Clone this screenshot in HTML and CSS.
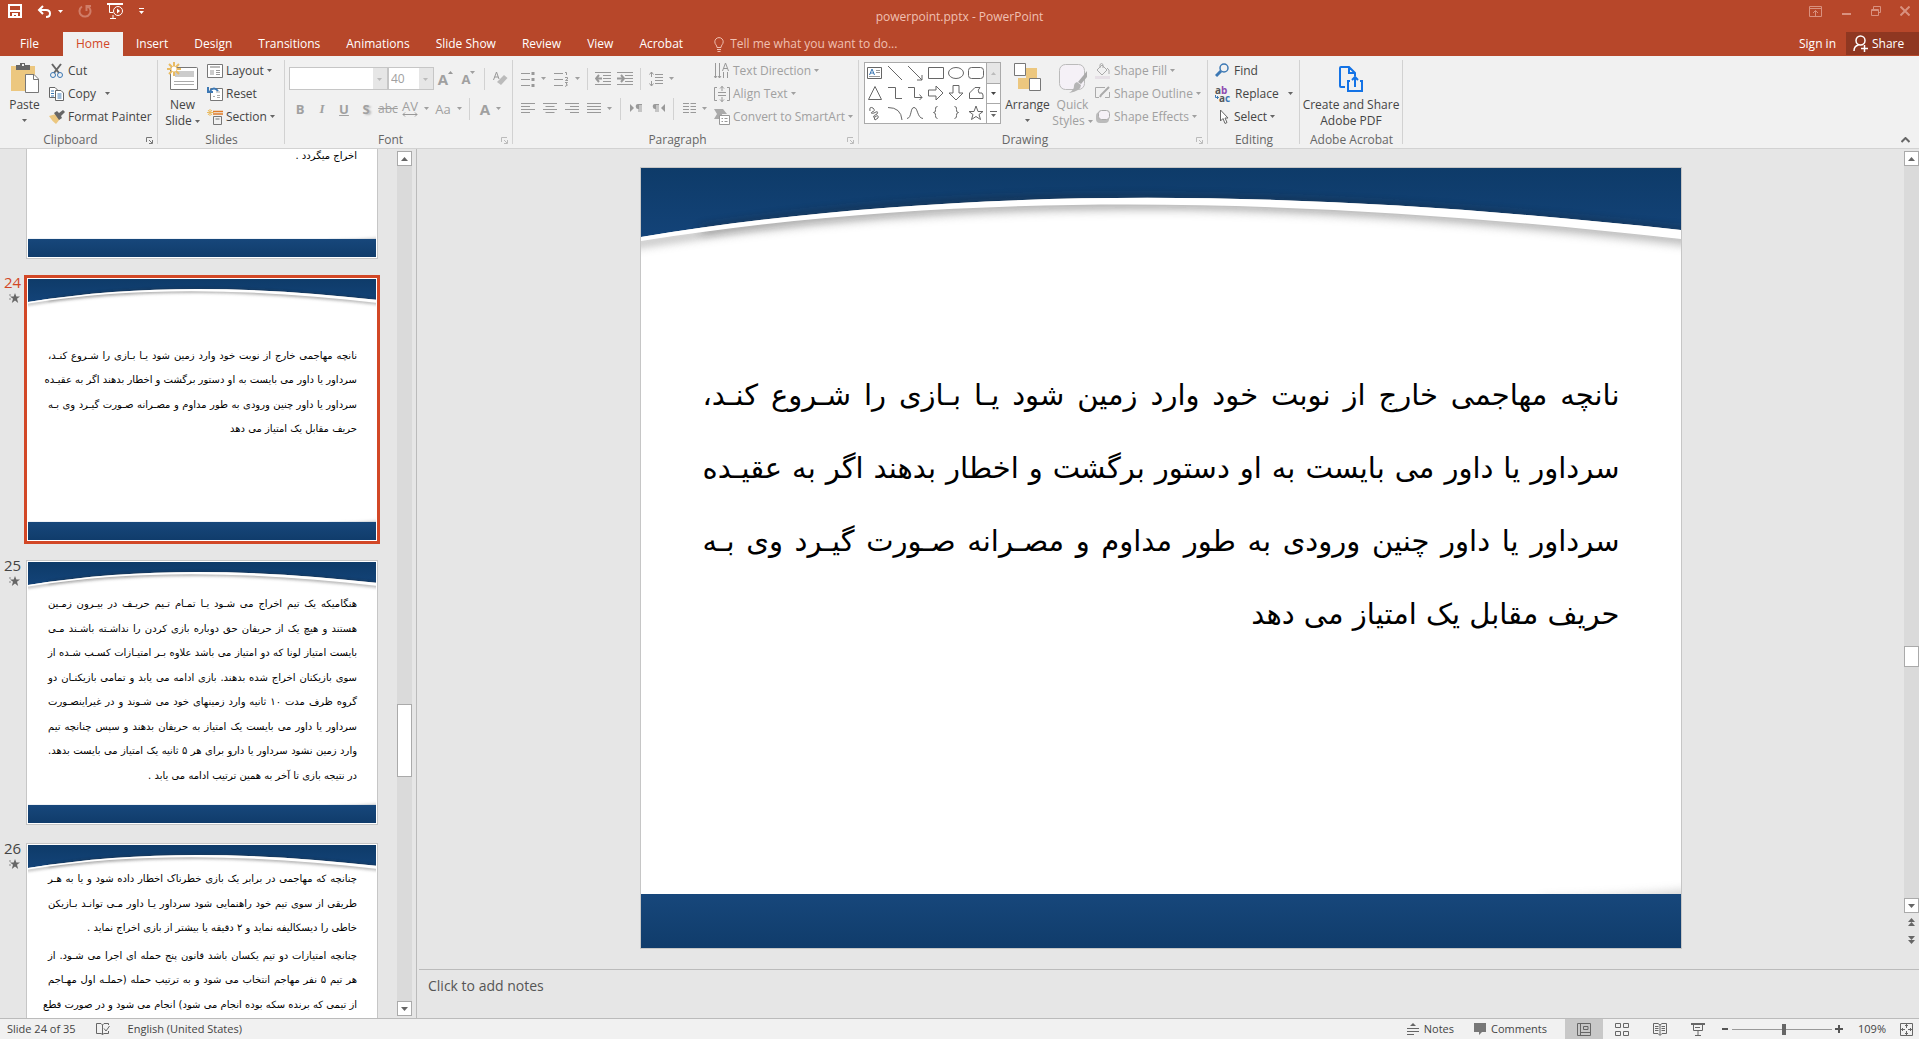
FILE: index.html
```
<!DOCTYPE html>
<html lang="en">
  <head>
    <meta charset="utf-8">
    <meta name="viewport" content="width=device-width, initial-scale=1">
    <title>powerpoint.pptx - PowerPoint</title>
    <link rel="stylesheet" href="styles.css">
  </head>
  <body>
    <!-- shared drawings -->
    <svg class="defs" width="0" height="0" aria-hidden="true">
      <defs>
        <linearGradient id="sky" x1="0" y1="0" x2="0" y2="1">
          <stop offset="0" stop-color="#0e3b69"/>
          <stop offset="1" stop-color="#134378"/>
        </linearGradient>
        <linearGradient id="sea" x1="0" y1="0" x2="0" y2="1">
          <stop offset="0" stop-color="#17477b"/>
          <stop offset="1" stop-color="#103c6b"/>
        </linearGradient>
        <filter id="soft" x="-5%" y="-50%" width="110%" height="200%">
          <feGaussianBlur stdDeviation="5"/>
        </filter>
        <symbol id="backdrop" viewBox="0 0 1040 780">
          <rect width="1040" height="780" fill="#fff"/>
          <path d="M-20 78C347 18 693 32 1060 75" fill="none" stroke="#999" stroke-width="8" opacity=".7" filter="url(#soft)"/>
          <path d="M0 0H1040V62C693 24 347 12 0 69Z" fill="url(#sky)"/>
          <path d="M60 62C370 14 693 27 1060 66" fill="none" stroke="#222" stroke-width="6" opacity=".45" filter="url(#soft)"/>
          <path d="M0 69C347 12 693 24 1040 62V71C693 32 347 18 0 73Z" fill="#fff"/>
          <path d="M900 730Q980 728 1060 720V740H900Z" fill="#999" opacity=".4" filter="url(#soft)"/>
          <rect y="726" width="1040" height="54" fill="url(#sea)"/>
        </symbol>
        <symbol id="caret" viewBox="0 0 5 3"><path d="M0 0H5L2.500 3Z" fill="currentColor"/></symbol>
        <symbol id="star" viewBox="0 0 11 10"><path d="M6 0L7.300 3.500H11L8 5.800L9.200 10L6 7.400L2.800 10L4 5.800L1 3.500H4.700Z" fill="#666"/><path d="M0 2H2M0 6H2" stroke="#888"/></symbol>
        <symbol id="launch" viewBox="0 0 7 7"><path d="M0.500 5V0.500H6M3 3L6 6M6.500 3V6.500H3" fill="none" stroke="currentColor"/></symbol>
        <symbol id="up" viewBox="0 0 7 4"><path d="M0 4H7L3.500 0Z" fill="#666"/></symbol>
        <symbol id="down" viewBox="0 0 7 4"><path d="M0 0H7L3.500 4Z" fill="#666"/></symbol>
      </defs>
    </svg>

    <header class="titlebar">
      <div class="quick">
        <button type="button" aria-label="Save"><svg width="14" height="14" fill="none" stroke="#fff" stroke-width="2"><path d="M1 1H13V13H1ZM1 7H13M5 13V10H9V13"/></svg></button>
        <button type="button" aria-label="Undo"><svg width="15" height="13" fill="none" stroke="#fff" stroke-width="2"><path d="M6 1L2 5L6 9M2 5H9Q13 5 13 8.500T9 12"/></svg><svg class="caret" width="5" height="3"><use href="#caret"/></svg></button>
        <button type="button" aria-label="Repeat" disabled><svg width="14" height="14" fill="none" stroke="#d07d68" stroke-width="2"><path d="M9 2A5.500 5.500 0 1 1 4 2.500M8.500 7V2H13"/></svg></button>
        <button type="button" aria-label="Start from beginning"><svg width="17" height="16" fill="none" stroke="#fff"><path d="M0 1H16" stroke-width="2"/><path d="M2.500 2V9.500H6M3 15.500H9M6 15V12"/><circle cx="11" cy="8" r="4.500"/><path d="M10 5.500V10.500L13 8Z" fill="#fff" stroke="none"/></svg></button>
        <button type="button" aria-label="Customize toolbar"><svg width="5" height="6" fill="#fff"><path d="M0 0H5V1H0ZM0 3H5L2.500 6Z"/></svg></button>
      </div>
      <h1>powerpoint.pptx - PowerPoint</h1>
      <div class="window">
        <button type="button" aria-label="Ribbon display options"><svg width="14" height="11" fill="none" stroke="#d9917f"><path d="M.5.500H12.500V10.500H.5ZM.5 2.500H12.500M6.500 10V4.500M4 7L6.500 4.500L9 7"/></svg></button>
        <button type="button" aria-label="Minimize"><svg width="10" height="10"><path d="M0 7H9V9H0Z" fill="#d9917f"/></svg></button>
        <button type="button" aria-label="Restore"><svg width="10" height="10" fill="none" stroke="#d9917f"><path d="M.5 3.500H7.500V9.500H.5ZM2.500 3V.5H9.500V6.500H8M.5 4.500H7.500"/></svg></button>
        <button type="button" aria-label="Close"><svg width="10" height="10" stroke="#d9917f" stroke-width="2"><path d="M.5.500L9.500 9.500M9.500.500L.5 9.500"/></svg></button>
      </div>
    </header>

    <nav class="tabs">
      <a class="file" href="#file">File</a>
      <a class="current" href="#home">Home</a>
      <a href="#insert">Insert</a>
      <a href="#design">Design</a>
      <a href="#transitions">Transitions</a>
      <a href="#animations">Animations</a>
      <a href="#slideshow">Slide Show</a>
      <a href="#review">Review</a>
      <a href="#view">View</a>
      <a href="#acrobat">Acrobat</a>
      <label class="tell">
        <svg width="10" height="15" fill="none" stroke="#f0c0b2"><path d="M3 10.500C3 8 .8 7.500 .8 4.800A4.200 4.200 0 0 1 9.200 4.800C9.200 7.500 7 8 7 10.500ZM3 12.500H7M3.500 14.500H6.500"/></svg>
        <input type="text" placeholder="Tell me what you want to do...">
      </label>
      <a class="signin" href="#signin">Sign in</a>
      <button type="button" class="share"><svg width="16" height="17" fill="none" stroke="#fff" stroke-width="1.500"><circle cx="7.500" cy="5.500" r="4.500"/><path d="M1 16Q1 11 5.500 10M8 13.500H15M11.500 10V17"/></svg>Share</button>
    </nav>

    <section class="ribbon">
      <div class="group clipboard">
        <div class="tools">
          <button type="button" class="big">
            <svg width="30" height="32"><path d="M1 4H25V29H1Z" fill="#ecc77f"/><path d="M6 3H10V1H15V3H20V8H6Z" fill="#666"/><path d="M12 2H14V4H12Z" fill="#f1f1f1"/><path d="M15.500 12.500H24L28.500 17V30.500H15.500Z" fill="#fff" stroke="#777"/><path d="M23.500 13V17.500H28" fill="none" stroke="#777"/></svg>
            <span>Paste</span>
            <svg class="caret" width="5" height="3"><use href="#caret"/></svg>
          </button>
          <div class="rows">
            <button type="button"><svg width="16" height="16" fill="none"><path d="M3 1L10 10M12 1L5 10" stroke="#666" stroke-width="2"/><circle cx="4" cy="12" r="2.500" stroke="#3c78b4"/><circle cx="11" cy="12" r="2.500" stroke="#3c78b4"/></svg>Cut</button>
            <button type="button"><svg width="16" height="16" fill="#fff" stroke="#666"><path d="M.5 1.500H6L8.500 4V11.500H.5Z"/><path d="M6.500 4.500H12L14.500 7V14.500H6.500Z"/><path d="M2 5H5M2 7.500H5M2 10H5M8.500 8H12.500M8.500 10H12.500M8.500 12H12.500" stroke="#3c78b4"/></svg>Copy<svg class="caret far" width="5" height="3"><use href="#caret"/></svg></button>
            <button type="button"><svg width="16" height="16"><path d="M0 7L7 5L11 10L7 15Q3 12 0 7Z" fill="#ecc77f"/><path d="M5 4L8 2L10 4L14 1L16 3L12 7L13 9L10 11Z" fill="#666"/></svg>Format Painter</button>
          </div>
        </div>
        <h2>Clipboard</h2>
        <svg class="launch" width="7" height="7"><use href="#launch"/></svg>
      </div>

      <div class="group slides">
        <div class="tools">
          <button type="button" class="big">
            <svg width="32" height="32" fill="none"><path d="M3.500 6.500Q3.500 5.500 4.500 5.500H29.500Q30.500 5.500 30.500 6.500V27.500H3.500Z" fill="#fff" stroke="#777"/><path d="M8 9H27V15H8Z" fill="#ccc"/><path d="M7 19.500H27M7 22.500H27" stroke="#aaa"/><path d="M7 0V14M0 7H14M2 2L12 12M12 2L2 12" stroke="#e9bb62" stroke-width="2"/><circle cx="7" cy="7" r="2.500" fill="#fff"/></svg>
            <span>New</span>
            <span>Slide<svg class="caret" width="5" height="3"><use href="#caret"/></svg></span>
          </button>
          <div class="rows">
            <button type="button"><svg width="16" height="16" fill="none" stroke="#777"><path d="M.5 1.500H15.500V14.500H.5Z" fill="#fff"/><path d="M3 4H13" stroke="#bbb" stroke-width="2"/><path d="M3 7H7V12H3Z" fill="#ccc" stroke="none"/><path d="M9 7.500H13M9 9.500H13M9 11.500H13" stroke="#999"/></svg>Layout<svg class="caret" width="5" height="3"><use href="#caret"/></svg></button>
            <button type="button"><svg width="16" height="16" fill="none" stroke="#777"><path d="M3.500 2.500H15.500V14.500H3.500Z" fill="#fff"/><path d="M9 6H13M10 9.500H13M10 11.500H13M6 10.500H8" stroke="#aaa"/><path d="M11 5Q7 0 3 5M1 1V6H6" stroke="#3c78b4" stroke-width="2"/></svg>Reset</button>
            <button type="button"><svg width="16" height="16" fill="none" stroke="#777"><path d="M6.500 7.500H14.500V15.500H6.500ZM8.500 10H12.500"/><path d="M6 2.500H16M6 5H16" stroke="#e07b27" stroke-width="1.500"/><path d="M3 0V7M0 3.500H7M1 1L5 6M5 1L1 6" stroke="#e9bb62"/></svg>Section<svg class="caret" width="5" height="3"><use href="#caret"/></svg></button>
          </div>
        </div>
        <h2>Slides</h2>
      </div>

      <div class="group font">
        <div class="tools stack">
          <div class="line">
            <span class="combo"><select class="face" aria-label="Font" disabled><option></option></select><svg class="caret" width="5" height="3"><use href="#caret"/></svg></span>
            <span class="combo"><select class="size" aria-label="Font size" disabled><option>40</option></select><svg class="caret" width="5" height="3"><use href="#caret"/></svg></span>
            <button type="button" class="ic" disabled aria-label="Increase font size"><b class="grow">A</b><svg width="5" height="3"><path d="M0 3H5L2.500 0Z" fill="#999"/></svg></button>
            <button type="button" class="ic" disabled aria-label="Decrease font size"><b>A</b><svg width="5" height="3"><use href="#caret"/></svg></button>
            <i class="sep"></i>
            <button type="button" class="ic" disabled aria-label="Clear formatting"><svg width="15" height="15" fill="none" stroke="#999"><path d="M0.500 9L3.500 1L6 8M1.500 6H5"/><path d="M4 11L11 4L14.500 7L8 14Z" fill="#bbb" stroke="none"/></svg></button>
          </div>
          <div class="line">
            <button type="button" class="ic" disabled><b>B</b></button>
            <button type="button" class="ic" disabled><b class="serif"><em>I</em></b></button>
            <button type="button" class="ic" disabled><b><u>U</u></b></button>
            <button type="button" class="ic" disabled><b class="shade">S</b></button>
            <button type="button" class="ic" disabled><s>abc</s></button>
            <button type="button" class="ic wide" disabled aria-label="Character spacing"><span class="track">AV<svg width="16" height="5" fill="none" stroke="#999"><path d="M3 .5L1 2.500L3 4.500M13 .5L15 2.500L13 4.500M1 2.500H15"/></svg></span><svg class="caret" width="5" height="3"><use href="#caret"/></svg></button>
            <button type="button" class="ic wide" disabled><span>Aa</span><svg class="caret" width="5" height="3"><use href="#caret"/></svg></button>
            <i class="sep"></i>
            <button type="button" class="ic wide" disabled><b class="grow">A</b><svg class="caret low" width="5" height="3"><use href="#caret"/></svg></button>
          </div>
        </div>
        <h2>Font</h2>
        <svg class="launch off" width="7" height="7"><use href="#launch"/></svg>
      </div>

      <div class="group paragraph">
        <div class="tools">
          <div class="stack">
            <div class="line">
              <button type="button" class="ic wide" disabled aria-label="Bullets"><svg width="14" height="16" stroke="#999"><path d="M0 2.500H9M0 8.500H9M0 14.500H9"/><path d="M10.500 2.500H13.500M10.500 8.500H13.500M10.500 14.500H13.500" stroke-width="3"/></svg><svg class="caret" width="5" height="3"><use href="#caret"/></svg></button>
              <button type="button" class="ic wide" disabled aria-label="Numbering"><svg width="15" height="16" fill="none" stroke="#999"><path d="M0 2.500H9M0 8.500H9M0 14.500H9M11 1.500H12.500V4M11 6.500H13.500V8L11.500 9.500H14M11 11.500H13.500L12 13L13.500 14L11 15.500"/></svg><svg class="caret" width="5" height="3"><use href="#caret"/></svg></button>
              <i class="sep"></i>
              <button type="button" class="ic" disabled aria-label="Decrease list level"><svg width="16" height="14" fill="none" stroke="#999"><path d="M0 .5H16M8 3.500H16M8 6.500H16M8 9.500H16M0 12.500H16"/><path d="M4 3L1 6.500L4 10M1 6.500H7" stroke-width="2"/></svg></button>
              <button type="button" class="ic" disabled aria-label="Increase list level"><svg width="16" height="14" fill="none" stroke="#999"><path d="M0 .5H16M8 3.500H16M8 6.500H16M8 9.500H16M0 12.500H16"/><path d="M4 3L7 6.500L4 10M0 6.500H6" stroke-width="2"/></svg></button>
              <i class="sep"></i>
              <button type="button" class="ic wide" disabled aria-label="Line spacing"><svg width="14" height="16" fill="none" stroke="#999"><path d="M6 3.500H14M6 6.500H14M6 9.500H14M6 12.500H14M.5 3.500L2.500 1L4.500 3.500M2.500 1V6M.5 12.500L2.500 15L4.500 12.500M2.500 15V10"/></svg><svg class="caret" width="5" height="3"><use href="#caret"/></svg></button>
            </div>
            <div class="line">
              <button type="button" class="ic" disabled aria-label="Align left"><svg width="14" height="11" stroke="#999"><path d="M0 .5H14M0 3.500H9M0 6.500H14M0 9.500H9"/></svg></button>
              <button type="button" class="ic" disabled aria-label="Center"><svg width="14" height="11" stroke="#999"><path d="M0 .5H14M2.500 3.500H11.500M0 6.500H14M2.500 9.500H11.500"/></svg></button>
              <button type="button" class="ic" disabled aria-label="Align right"><svg width="14" height="11" stroke="#999"><path d="M0 .5H14M5 3.500H14M0 6.500H14M5 9.500H14"/></svg></button>
              <button type="button" class="ic wide" disabled aria-label="Justify"><svg width="14" height="11" stroke="#999"><path d="M0 .5H14M0 3.500H14M0 6.500H14M0 9.500H14"/></svg><svg class="caret" width="5" height="3"><use href="#caret"/></svg></button>
              <i class="sep"></i>
              <button type="button" class="ic" disabled aria-label="Left to right"><svg width="13" height="9" fill="#999"><path d="M0 0L4 4L0 8ZM8 0H12V1H11.500V8H10.500V1H9.500V8H8.500V5A2.500 2.500 0 0 1 8 0Z"/></svg></button>
              <button type="button" class="ic" disabled aria-label="Right to left"><svg width="13" height="9" fill="#999"><path d="M13 0L9 4L13 8ZM3 0H7V1H6.500V8H5.500V1H4.500V8H3.500V5A2.500 2.500 0 0 1 3 0Z"/></svg></button>
              <i class="sep"></i>
              <button type="button" class="ic wide" disabled aria-label="Columns"><svg width="13" height="11" stroke="#999"><path d="M0 .5H6M0 3.500H6M0 6.500H6M0 9.500H6M7.500 .5H13M7.500 3.500H13M7.500 6.500H13M7.500 9.500H13"/></svg><svg class="caret" width="5" height="3"><use href="#caret"/></svg></button>
            </div>
          </div>
          <div class="rows">
            <button type="button" disabled><svg width="16" height="16" fill="none" stroke="#999"><path d="M1.500 0V15M5.500 0V15M9.500 9V15M13.500 9V15M8.500 8L11.500 0L14.500 8M9.500 5.500H13.500M0 13L1.500 15L3 13M4 13L5.500 15L7 13"/></svg>Text Direction<svg class="caret" width="5" height="3"><use href="#caret"/></svg></button>
            <button type="button" disabled><svg width="16" height="16" fill="none" stroke="#999"><path d="M3 1.500H.5V14.500H3M13 1.500H15.500V14.500H13M4 6.500H12M4 9.500H12M8 0V5M6 2.500L8 .5L10 2.500M8 11V16M6 13.500L8 15.500L10 13.500"/></svg>Align Text<svg class="caret" width="5" height="3"><use href="#caret"/></svg></button>
            <button type="button" disabled><svg width="16" height="16"><path d="M0 0H9L13 5H8V7H5V10H0L3 5Z" fill="#aaa"/><path d="M5.500 6.500H15.500V15.500H5.500Z" fill="#fff" stroke="#999"/><path d="M7.500 9.500H9M10.500 9.500H13.500M7.500 12.500H9M10.500 12.500H13.500" stroke="#999"/></svg>Convert to SmartArt<svg class="caret" width="5" height="3"><use href="#caret"/></svg></button>
          </div>
        </div>
        <h2>Paragraph</h2>
        <svg class="launch off" width="7" height="7"><use href="#launch"/></svg>
      </div>

      <div class="group drawing">
        <div class="tools">
          <div class="gallery">
            <div class="shapes">
              <button type="button" aria-label="Text box"><svg width="16" height="16"><path d="M.5 2.500H14.500V13.500H.5Z"/><path d="M2.500 10L5 4L7.500 10M3 8H7" stroke="#3c78b4"/><path d="M9 5.500H13M9 7.500H13M2 11.500H13" stroke="#999"/></svg></button>
              <button type="button" aria-label="Line"><svg width="16" height="16"><path d="M1 1L15 15"/></svg></button>
              <button type="button" aria-label="Arrow"><svg width="16" height="16"><path d="M1 1L15 15M15 10V15H10"/></svg></button>
              <button type="button" aria-label="Rectangle"><svg width="16" height="16"><path d="M.5 2.500H15.500V13.500H.5Z"/></svg></button>
              <button type="button" aria-label="Oval"><svg width="16" height="16"><ellipse cx="8" cy="8" rx="7.500" ry="5.500"/></svg></button>
              <button type="button" aria-label="Rounded rectangle"><svg width="16" height="16"><rect x=".5" y="2.500" width="15" height="11" rx="3"/></svg></button>
              <button type="button" aria-label="Triangle"><svg width="16" height="16"><path d="M8 1.500L14.500 14.500H1.500Z"/></svg></button>
              <button type="button" aria-label="Elbow connector"><svg width="16" height="16"><path d="M1 2.500H8.500V13.500H15"/></svg></button>
              <button type="button" aria-label="Elbow arrow"><svg width="16" height="16"><path d="M1 2.500H7.500V12.500H15M12.500 9.500L15 12.500L12.500 15"/></svg></button>
              <button type="button" aria-label="Right arrow"><svg width="16" height="16"><path d="M.5 5H8V1L15 8L8 15V11H.5Z"/></svg></button>
              <button type="button" aria-label="Down arrow"><svg width="16" height="16"><path d="M5 .5V8H1L8 15L15 8H11V.5Z"/></svg></button>
              <button type="button" aria-label="Freeform"><svg width="16" height="16"><path d="M12 2.500H7L1.500 8V13.500H15V10Q15 7 11 8Q9 5 12 2.500Z"/></svg></button>
              <button type="button" aria-label="Scribble"><svg width="16" height="16"><path d="M3 6Q2 1 6 3Q9 6 5 7Q3 9 7 8Q12 5 10 9Q4 12 8 12Q12 9 11 13L8 15L7 12"/></svg></button>
              <button type="button" aria-label="Arc"><svg width="16" height="16"><path d="M1 2.500Q14 2.500 15 15"/></svg></button>
              <button type="button" aria-label="Curve"><svg width="16" height="16"><path d="M0 13.500C5 13 3 2.500 7 2.500S10 13 16 13.500"/></svg></button>
              <button type="button" aria-label="Left brace"><svg width="16" height="16"><path d="M9.500 1.500Q7 1.500 7.500 4.500T5.500 7.500Q8 8 7.500 10.500T9.500 13.500"/></svg></button>
              <button type="button" aria-label="Right brace"><svg width="16" height="16"><path d="M6.500 1.500Q9 1.500 8.500 4.500T10.500 7.500Q8 8 8.500 10.500T6.500 13.500"/></svg></button>
              <button type="button" aria-label="Star"><svg width="16" height="16"><path d="M8 1L10 6.500H15L11 9.500L12.500 14.500L8 11.500L3.500 14.500L5 9.500L1 6.500H6Z"/></svg></button>
            </div>
            <div class="pager">
              <button type="button" disabled aria-label="Row up"><svg width="5" height="3"><path d="M0 3H5L2.500 0Z" fill="#bbb"/></svg></button>
              <button type="button" aria-label="Row down"><svg width="5" height="3"><use href="#caret"/></svg></button>
              <button type="button" aria-label="More shapes"><svg width="7" height="6" fill="#666"><path d="M0 0H7V1H0ZM1 3H6L3.500 6Z"/></svg></button>
            </div>
          </div>
          <button type="button" class="big">
            <svg width="30" height="32"><path d="M13 6H24V17H13ZM5 16H16V27H5Z" fill="#ecc77f"/><path d="M1.500 1.500H12.500V13.500H1.500ZM16.500 16.500H27.500V28.500H16.500Z" fill="#fff" stroke="#777"/></svg>
            <span>Arrange</span>
            <svg class="caret" width="5" height="3"><use href="#caret"/></svg>
          </button>
          <button type="button" class="big" disabled>
            <svg width="30" height="32"><rect x="1.500" y="2.500" width="25" height="25" rx="6" fill="#f5f1f7" stroke="#bbb"/><path d="M29 9V15L23 22L20 20Z" fill="#aaa"/><path d="M19 20L23 23Q23 29 11 31Q16 28 16 24Q16 21 19 20Z" fill="#b5b5b5"/></svg>
            <span>Quick</span>
            <span>Styles<svg class="caret" width="5" height="3"><use href="#caret"/></svg></span>
          </button>
          <div class="rows">
            <button type="button" disabled><svg width="16" height="16" fill="none" stroke="#aaa"><path d="M2 7L7 2L12 7L7 12ZM5 5V1.500Q6.500-.5 8 1.500V5M12 5Q15 6 14 11"/><path d="M0 13H15V16H0Z" fill="#e6e0e6" stroke="none"/></svg>Shape Fill<svg class="caret" width="5" height="3"><use href="#caret"/></svg></button>
            <button type="button" disabled><svg width="16" height="16" fill="none" stroke="#aaa"><path d="M10 1.500H.5V11.500H4M14.500 6V11.500H10"/><path d="M14 1L6 9L5 11" stroke-width="2"/></svg>Shape Outline<svg class="caret" width="5" height="3"><use href="#caret"/></svg></button>
            <button type="button" disabled><svg width="16" height="16"><rect x="1" y="3" width="13" height="11" rx="4" fill="#bbb"/><rect x="3.500" y="1.500" width="11" height="9" rx="3" fill="#f5f1f7" stroke="#aaa"/></svg>Shape Effects<svg class="caret" width="5" height="3"><use href="#caret"/></svg></button>
          </div>
        </div>
        <h2>Drawing</h2>
        <svg class="launch off" width="7" height="7"><use href="#launch"/></svg>
      </div>

      <div class="group editing">
        <div class="tools">
          <div class="rows">
            <button type="button"><svg width="16" height="16" fill="none" stroke="#3c78b4"><circle cx="9" cy="5" r="4" stroke-width="1.500"/><path d="M6 8L1 13" stroke-width="3"/></svg>Find</button>
            <button type="button"><span class="swap"><b>a<i>b</i></b><b><svg width="4" height="5" fill="none" stroke="#3c78b4"><path d="M.5 0V2.500H3.500M2 1L3.500 2.500L2 4"/></svg>a<u>c</u></b></span>Replace<svg class="caret far" width="5" height="3"><use href="#caret"/></svg></button>
            <button type="button"><svg width="16" height="16"><path d="M5.500 1V12L8 9.500L10 14.500L12 13.500L10 9H13Z" fill="#fff" stroke="#666"/></svg>Select<svg class="caret" width="5" height="3"><use href="#caret"/></svg></button>
          </div>
        </div>
        <h2>Editing</h2>
      </div>

      <div class="group acrobat">
        <div class="tools">
          <button type="button" class="big">
            <svg width="26" height="32" fill="none" stroke="#1473e6" stroke-width="2"><path d="M7 25H3Q2 25 2 24V6Q2 5 3 5H11L17 11V14M11 5V11H17M12 19H10V29H24V19H22M17 25V15M14 18L17 15L20 18"/></svg>
            <span>Create and Share</span>
            <span>Adobe PDF</span>
          </button>
        </div>
        <h2>Adobe Acrobat</h2>
      </div>
      <button type="button" class="collapse" aria-label="Collapse the ribbon"><svg width="9" height="6" fill="none" stroke="#666" stroke-width="2"><path d="M.5 5L4.500 1L8.500 5"/></svg></button>
    </section>

    <main>
      <aside class="outline">
        <ol>
          <li>
            <div class="mark"></div>
            <div class="thumb">
              <svg class="art" viewBox="0 0 1040 780"><use href="#backdrop"/></svg>
              <div class="copy s23" lang="fa" dir="rtl">
                <p class="end">اخراج میگردد .</p>
              </div>
            </div>
          </li>
          <li class="selected">
            <div class="mark">24<svg width="11" height="10"><use href="#star"/></svg></div>
            <div class="thumb">
              <svg class="art" viewBox="0 0 1040 780"><use href="#backdrop"/></svg>
              <div class="copy s24" lang="fa" dir="rtl">
                <p>نانچه مهاجمی خارج از نوبت خود وارد زمین شود یـا بـازی را شـروع کنـد،</p>
                <p>سرداور یا داور می بایست به او دستور برگشت و اخطار بدهند اگر به عقیـده</p>
                <p>سرداور یا داور چنین ورودی به طور مداوم و مصـرانه صـورت گیـرد وی بـه</p>
                <p class="end">حریف مقابل یک امتیاز می دهد</p>
              </div>
            </div>
          </li>
          <li>
            <div class="mark">25<svg width="11" height="10"><use href="#star"/></svg></div>
            <div class="thumb">
              <svg class="art" viewBox="0 0 1040 780"><use href="#backdrop"/></svg>
              <div class="copy s25" lang="fa" dir="rtl">
                <p>هنگامیکه یک تیم اخراج می شـود یـا تمـام تـیم حریـف در بیـرون زمـین</p>
                <p>هستند و هیچ یک از حریفان حق دوباره بازی کردن را نداشـته باشـند مـی</p>
                <p>بایست امتیاز لونا که دو امتیاز می باشد علاوه بـر امتیـازات کسـب شـده از</p>
                <p>سوی بازیکنان اخراج شده بدهند. بازی ادامه می یابد و تمامی بازیکنـان دو</p>
                <p>گروه ظرف مدت ۱۰ ثانیه وارد زمینهای خود می شـوند و در غیراینصـورت</p>
                <p>سرداور یا داور می بایست یک امتیاز به حریفان بدهند و سپس چنانچه تیم</p>
                <p>وارد زمین نشود سرداور یا دارو برای هر ۵ ثانیه یک امتیاز می بایست بدهد.</p>
                <p class="end">در نتیجه بازی تا آخر به همین ترتیب ادامه می یابد .</p>
              </div>
            </div>
          </li>
          <li>
            <div class="mark">26<svg width="11" height="10"><use href="#star"/></svg></div>
            <div class="thumb">
              <svg class="art" viewBox="0 0 1040 780"><use href="#backdrop"/></svg>
              <div class="copy s26" lang="fa" dir="rtl">
                <p>چنانچه که مهاجمی در برابر یک بازی خطرناک اخطار داده شود و یا به هـر</p>
                <p>طریقی از سوی تیم خود راهنمایی شود سرداور یـا داور مـی توانـد بـازیکن</p>
                <p class="end">خاطی را دیسکالیفه نماید و ۲ دقیقه یا بیشتر از بازی اخراج نماید .</p>
                <p class="next">چنانچه امتیازات دو تیم یکسان باشد قانون پنج حمله ای اجرا می شـود. از</p>
                <p>هر تیم ۵ نفر مهاجم انتخاب می شود و به ترتیب حمله (حملـه اول مهـاجم</p>
                <p>از تیمی که برنده سکه بوده انجام می شود) انجام می شود و در صورت قطع</p>
              </div>
            </div>
          </li>
        </ol>
        <div class="scroll">
          <button type="button" aria-label="Scroll up"><svg width="7" height="4"><use href="#up"/></svg></button>
          <div class="track-left"><div class="handle tall"></div></div>
          <button type="button" aria-label="Scroll down"><svg width="7" height="4"><use href="#down"/></svg></button>
        </div>
      </aside>

      <div class="editor">
        <div class="canvas">
          <div class="stage">
            <article class="slide">
              <svg class="art" viewBox="0 0 1040 780"><use href="#backdrop"/></svg>
              <div class="body" lang="fa" dir="rtl">
                <p>نانچه مهاجمی خارج از نوبت خود وارد زمین شود یـا بـازی را شـروع کنـد،</p>
                <p>سرداور یا داور می بایست به او دستور برگشت و اخطار بدهند اگر به عقیـده</p>
                <p>سرداور یا داور چنین ورودی به طور مداوم و مصـرانه صـورت گیـرد وی بـه</p>
                <p class="end">حریف مقابل یک امتیاز می دهد</p>
              </div>
            </article>
          </div>
          <div class="scroll">
            <button type="button" aria-label="Scroll up"><svg width="7" height="4"><use href="#up"/></svg></button>
            <div class="track-right"><div class="handle"></div></div>
            <button type="button" aria-label="Scroll down"><svg width="7" height="4"><use href="#down"/></svg></button>
            <button type="button" class="jump" aria-label="Previous slide"><svg width="7" height="8" fill="#666"><path d="M0 4H7L3.500 0ZM0 8H7L3.500 4Z"/></svg></button>
            <button type="button" class="jump" aria-label="Next slide"><svg width="7" height="8" fill="#666"><path d="M0 0H7L3.500 4ZM0 4H7L3.500 8Z"/></svg></button>
          </div>
        </div>
        <textarea class="notes" aria-label="Notes" placeholder="Click to add notes"></textarea>
      </div>
    </main>

    <footer class="status">
      <span>Slide 24 of 35</span>
      <svg class="spell" width="14" height="13" fill="none" stroke="#666"><path d="M6.500 2V11.500L5 10.500H.5V.5H5L6.500 2L8 .5H12.500V2M6.500 11.500L8 10.500H12.500V8M8 5.500L10 8L13.500 3"/></svg>
      <span>English (United States)</span>
      <div class="right">
        <button type="button"><svg width="12" height="12" stroke="#666"><path d="M0 5.500H12M0 8.500H12M0 11.500H7"/><path d="M3 3H9L6 0Z" fill="#666" stroke="none"/></svg>Notes</button>
        <button type="button" class="comments"><svg width="12" height="12"><path d="M0 0H12V9H8L5 12V9H0Z" fill="#777"/></svg>Comments</button>
        <div class="views">
          <button type="button" class="on" aria-label="Normal"><svg width="14" height="13"><path d="M.5 .5H13.500V12.500H.5ZM3.500 .5V12.500M6.500 3.500H11V6.500H6.500ZM3.500 9.500H13.500"/></svg></button>
          <button type="button" aria-label="Slide sorter"><svg width="14" height="13"><path d="M.5 .5H5.500V4.500H.5ZM8.500 .5H13.500V4.500H8.500ZM.5 8.500H5.500V12.500H.5ZM8.500 8.500H13.500V12.500H8.500Z"/></svg></button>
          <button type="button" aria-label="Reading view"><svg width="14" height="13"><path d="M.5 .5H5L7 2L9 .5H13.500V10.500H9L7 12.500L5 10.500H.5ZM7 2V12M2 3.500H5.500M2 5.500H5.500M2 7.500H5.500M8.500 3.500H12M8.500 5.500H12M8.500 7.500H12"/></svg></button>
          <button type="button" aria-label="Slide show"><svg width="14" height="13"><path d="M0 1H14" stroke-width="2"/><path d="M2.500 2V7.500H11.500V2M4 4.500H9M7 8V12M4 12.500H10"/></svg></button>
        </div>
        <button type="button" class="step" aria-label="Zoom out"><svg width="8" height="8"><path d="M1 3H7V5H1Z" fill="#555"/></svg></button>
        <input type="range" class="zoom" aria-label="Zoom" min="0" max="100" value="52">
        <button type="button" class="step" aria-label="Zoom in"><svg width="8" height="8"><path d="M0 3H3V0H5V3H8V5H5V8H3V5H0Z" fill="#555"/></svg></button>
        <span class="percent">109%</span>
        <button type="button" class="fit" aria-label="Fit slide to window"><svg width="13" height="13" fill="none" stroke="#666"><path d="M.5 .5H12.500V12.500H.5ZM6.500 1V5M6.500 8V12M1 6.500H5M8 6.500H12M5 3L6.500 1.500L8 3M5 10L6.500 11.500L8 10M3 5L1.500 6.500L3 8M10 5L11.500 6.500L10 8"/></svg></button>
      </div>
    </footer>
  </body>
</html>
```

FILE: styles.css
```
* { box-sizing: border-box }
html, body { height: 100% }
body { margin: 0; display: flex; flex-direction: column; overflow: hidden; background: #e6e6e6; color: #444; font: 12px/16px "Open Sans", "Noto Sans", sans-serif }
h1, h2, p, ol { margin: 0; padding: 0; font-size: 12px; font-weight: normal }
button, input, select, textarea { font: inherit; color: inherit; border: 0; padding: 0; margin: 0; background: none; border-radius: 0 }
button { display: flex; align-items: center; justify-content: center; white-space: nowrap }
a { color: inherit; text-decoration: none }
svg { flex: none; display: block }
.defs { position: absolute }
.caret { color: #666 }

/* title bar */
.titlebar { flex: none; display: grid; grid-template-columns: 1fr auto 1fr; height: 32px; background: #b7472a; color: #f0c0b2 }
.titlebar h1 { line-height: 34px }
.quick { display: flex; align-items: flex-start; gap: 15px; padding: 3px 8px }
.quick button { height: 16px }
.quick .caret { color: #fff; margin-left: 6px }
.window { display: flex; justify-content: flex-end; align-items: flex-start; gap: 19px; padding: 6px 9px }

/* tabs */
.tabs { flex: none; display: flex; height: 24px; line-height: 24px; background: #b7472a; color: #fff }
.tabs a { padding: 0 13px }
.tabs .file { width: 63px; padding: 0 0 0 20px }
.tabs .current { background: #f1f1f1; color: #d24726 }
.tell { display: flex; align-items: center; gap: 6px; flex: 1; padding-left: 18px }
.tell input { flex: 1; min-width: 0 }
.tell input::placeholder { color: #f0c0b2; opacity: 1 }
.tabs .signin { padding: 0 10px }
.share { width: 73px; height: 23px; background: #8f3721; justify-content: flex-start; padding-left: 7px; gap: 3px }

/* ribbon */
.ribbon { flex: none; display: flex; height: 93px; background: #f1f1f1; border-bottom: 1px solid #d2d2d2; position: relative }
.group { flex: none; position: relative; padding-top: 3px; display: flex; flex-direction: column }
.group::after { content: ""; position: absolute; right: 0; top: 4px; bottom: 4px; width: 1px; background: #d2d2d2 }
.group h2 { height: 20px; line-height: 24px; text-align: center; color: #666 }
.clipboard h2, .font h2, .paragraph h2, .drawing h2 { padding-right: 17px }
.launch { position: absolute; right: 5px; bottom: 4px; color: #777 }
.off { color: #bbb }
.tools { display: flex; height: 69px }
.rows button { height: 23px; gap: 3px }
.rows .far { margin-left: 6px }
button:disabled, button:disabled .caret { color: #a0a0a0 }
.big { flex-direction: column; justify-content: flex-start; padding-top: 3px }
.big > svg:first-child { margin-bottom: 3px }
.big span { display: flex; align-items: center; gap: 3px; height: 16px }
.big > .caret { margin-top: 6px }
.clipboard { width: 158px }
.clipboard .big { width: 49px }
.slides { width: 127px }
.slides .big { width: 49px }
.font { width: 228px }
.paragraph { width: 346px }
.drawing { width: 349px }
.editing { width: 92px }
.editing .tools { padding-left: 7px }
.acrobat { width: 103px }
.acrobat .big { width: 102px }
.stack { display: flex; flex-direction: column; padding: 8px 0 0 4px; gap: 7px }
.paragraph .stack { padding-left: 4px; width: 201px }
.line { display: flex; height: 23px; align-items: center }
.sep { width: 1px; height: 22px; margin: 0 4px; background: #d2d2d2 }
.ic { width: 22px; height: 23px; flex: none }
.wide { width: 33px; gap: 6px }
.ic b, .ic span { font-size: 13px }
.ic .grow { font-size: 15px }
.font .line:first-child .ic b + svg { align-self: flex-start; margin-top: 4px }
.serif { font-family: "Liberation Serif", serif }
.shade { text-shadow: 2px 1px 2px #bbb }
.track { line-height: 12px; text-align: center }
.combo { position: relative; display: flex; height: 23px; background: linear-gradient(#e6e6e6, #e6e6e6) right / 14px 100% no-repeat #fff; border: 1px solid #c6c6c6 }
.combo select { appearance: none; color: #a0a0a0; opacity: 1; padding-left: 2px }
.combo .caret { position: absolute; right: 5px; top: 10px; color: #bbb }
.face { width: 97px }
.size { width: 44px }
.font .line:first-child .ic { width: 23px }
.gallery { display: flex; margin: 3px 4px 0 5px; width: 137px; height: 62px; border: 1px solid #aaa; background: #fff }
.shapes { flex: 1; display: grid; grid-template-columns: repeat(6, 1fr); grid-auto-rows: 20px }
.shapes svg { fill: none; stroke: #666 }
.pager { width: 14px; border-left: 1px solid #aaa; display: grid; grid-template-rows: repeat(3, 1fr) }
.pager button + button { border-top: 1px solid #aaa }
.pager button:disabled { background: #e6e6e6 }
.drawing .big { width: 45px }
.swap { width: 17px; font-size: 10px; line-height: 8px; color: #555 }
.swap b { display: flex; align-items: center }
.swap i { color: #8e4bb0; font-style: normal }
.swap u { color: #3c78b4; text-decoration: none }
.collapse { position: absolute; right: 9px; bottom: 5px }

/* panes */
main { flex: 1; min-height: 0; display: flex }
.outline { flex: none; width: 417px; display: flex; justify-content: space-between; padding-right: 5px; overflow: hidden; box-shadow: inset -1px 0 #bbb }
/* the list is scrolled part way down slide 23 */
.outline ol { margin-top: -155px; list-style: none }
.outline li { display: grid; grid-template-columns: 26px 352px; margin-bottom: 18px }
.mark { font-size: 15px; line-height: 11px; padding-left: 4px }
.mark svg { margin: 5px 0 0 5px }
.thumb { position: relative; height: 265px; padding: 1px; border: 1px solid #c6c6c6; background: #fff }
.selected .mark { color: #d24726 }
.selected .thumb { border-color: #d24726; outline: 2px solid #d24726 }
.art { width: 100%; height: 100% }
.copy, .body { position: absolute; top: 0; left: 0; right: 0; display: flex; flex-direction: column; justify-content: space-between; color: #000; white-space: nowrap }
.copy { padding: 0 20px 0 21px; font-family: "DejaVu Sans", sans-serif }
.copy p { font-size: 10px; line-height: 18px; text-align-last: justify }
.copy .end, .body .end { text-align-last: right }
.s23 { top: 152px }
.s24 { top: 69px; height: 91px }
.s25 { top: 34px; height: 190px }
.s26 { top: 26px; height: 144px }
.s26 .next { margin-top: 3px }

.scroll { flex: none; width: 15px; display: flex; flex-direction: column; padding: 2px 0 }
.scroll button { width: 15px; height: 15px; background: #fff; border: 1px solid #aaa }
.scroll .jump { height: 18px; border: 0; background: none }
.track-left, .track-right { flex: 1; background: #dadada; display: flex; flex-direction: column }
.track-left::before { content: ""; flex: 538 }
.track-left::after { content: ""; flex: 224 }
.track-right::before { content: ""; flex: 481 }
.track-right::after { content: ""; flex: 231 }
.handle { height: 21px; background: #fff; border: 1px solid #aaa }
.tall { height: 73px }
.editor { flex: 1; min-width: 0; display: flex; flex-direction: column }
.canvas { flex: 1; min-height: 0; display: flex }
.canvas .scroll { padding-bottom: 20px }
.stage { flex: 1; display: flex; align-items: center; justify-content: center; min-width: 0; padding: 19px 20px 21px }
.slide { position: relative; height: 100%; aspect-ratio: 4 / 3; outline: 1px solid #c6c6c6; background: #fff }
.body { top: 191px; height: 292px; padding: 0 61px 0 62px; font-family: "DejaVu Sans", sans-serif }
.body p { font-size: 29px; line-height: 73px; text-align-last: justify }
.notes { flex: none; height: 49px; resize: none; border-top: 1px solid #bbb; margin-left: 2px; padding: 7px 9px; font-size: 14px; line-height: 18px; outline: 0 }
.notes::placeholder { color: #555; opacity: 1 }

/* status bar */
.status { flex: none; display: flex; align-items: center; height: 21px; background: #f1f1f1; border-top: 1px solid #bbb; padding-left: 7px; font-size: 11px }
.spell { margin: 0 18px 0 20px }
.right { margin-left: auto; display: flex; align-items: center; height: 20px }
.right button { gap: 5px; height: 20px }
.comments { margin: 0 18px 0 20px }
.views { display: flex; margin-right: 1px }
.views button { width: 38px }
.views svg { fill: none; stroke: #666 }
.views .on { background: #c8c8c8 }
.step { width: 14px }
.zoom { appearance: none; width: 100px; height: 1px; background: #999 }
.zoom::-webkit-slider-thumb { appearance: none; width: 4px; height: 11px; background: #666 }
.percent { margin: 0 14px 0 12px }
.fit { margin-right: 6px }
```
